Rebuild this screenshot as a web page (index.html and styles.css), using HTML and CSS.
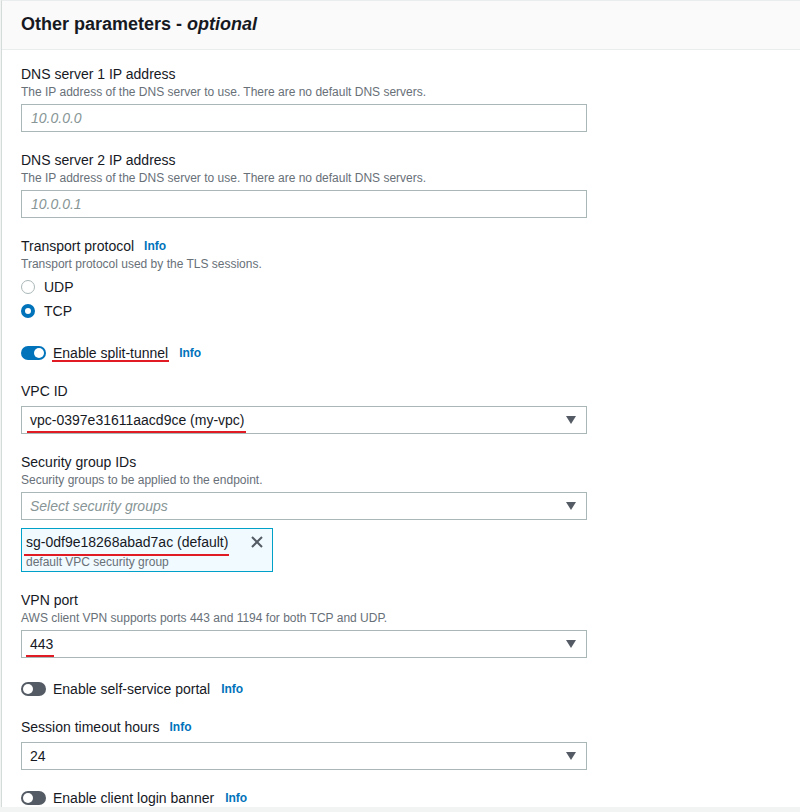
FILE: index.html
```html
<!DOCTYPE html>
<html lang="en">
<head>
<meta charset="utf-8">
<title>Other parameters</title>
<link rel="stylesheet" href="styles.css">
</head>
<body>
<div class="card">
  <div class="card-header">
    <h2 class="title">Other parameters - <i>optional</i></h2>
  </div>
  <div class="card-body">
    <div class="field">
      <div class="label">DNS server 1 IP address</div>
      <div class="desc">The IP address of the DNS server to use. There are no default DNS servers.</div>
      <div class="input"><span class="placeholder">10.0.0.0</span></div>
    </div>
    <div class="field">
      <div class="label">DNS server 2 IP address</div>
      <div class="desc">The IP address of the DNS server to use. There are no default DNS servers.</div>
      <div class="input"><span class="placeholder">10.0.0.1</span></div>
    </div>
    <div class="field">
      <div class="label">Transport protocol <a class="info">Info</a></div>
      <div class="desc">Transport protocol used by the TLS sessions.</div>
      <div class="radios">
        <div class="radio-row"><span class="radio"></span><span>UDP</span></div>
        <div class="radio-row"><span class="radio checked"></span><span>TCP</span></div>
      </div>
    </div>
    <div class="toggle-row first-toggle">
      <span class="toggle on"></span>
      <span class="toggle-label"><span class="mark mark-tog">Enable split-tunnel</span></span>
      <a class="info">Info</a>
    </div>
    <div class="field">
      <div class="label">VPC ID</div>
      <div class="select"><span class="value"><span class="mark mark-sel">vpc-0397e31611aacd9ce (my-vpc)</span></span><span class="caret"></span></div>
    </div>
    <div class="field">
      <div class="label">Security group IDs</div>
      <div class="desc">Security groups to be applied to the endpoint.</div>
      <div class="select"><span class="value placeholder">Select security groups</span><span class="caret"></span></div>
      <div class="token">
        <div class="token-text">
          <div class="token-main"><span class="mark mark-tok">sg-0df9e18268abad7ac (default)</span></div>
          <div class="token-sub">default VPC security group</div>
        </div>
        <svg class="token-x" width="14" height="14" viewBox="0 0 14 14"><path d="M2 2 L12 12 M12 2 L2 12" stroke="#545b64" stroke-width="2" fill="none"/></svg>
      </div>
    </div>
    <div class="field">
      <div class="label">VPN port</div>
      <div class="desc">AWS client VPN supports ports 443 and 1194 for both TCP and UDP.</div>
      <div class="select"><span class="value"><span class="mark mark-sel mark-port">443</span></span><span class="caret"></span></div>
    </div>
    <div class="toggle-row mid-toggle">
      <span class="toggle"></span>
      <span class="toggle-label">Enable self-service portal</span>
      <a class="info">Info</a>
    </div>
    <div class="field">
      <div class="label">Session timeout hours <a class="info">Info</a></div>
      <div class="select"><span class="value">24</span><span class="caret"></span></div>
    </div>
    <div class="toggle-row">
      <span class="toggle"></span>
      <span class="toggle-label">Enable client login banner</span>
      <a class="info">Info</a>
    </div>
  </div>
</div>
</body>
</html>
```
FILE: styles.css
```css
* { box-sizing: border-box; }
html, body { margin: 0; padding: 0; }
body {
  background: #f2f3f3;
  font-family: "Liberation Sans", Arial, sans-serif;
  color: #16191f;
  height: 812px;
  overflow: hidden;
}
.card {
  margin: 0 -4px 0 1px;
  background: #fff;
  border-left: 1px solid #d5dbdb;
  border-top: 1px solid #eaeded;
  height: 807px;
  overflow: hidden;
}
.card-header {
  height: 49px;
  background: #fafafa;
  border-bottom: 1px solid #eaeded;
  padding: 0 19px;
  display: flex;
  align-items: center;
}
.title {
  margin: 0;
  font-size: 18px;
  font-weight: 700;
  line-height: 22px;
  padding-bottom: 2px;
}
.card-body {
  padding: 14px 0 0 19px;
  width: 585px;
  display: flex;
  flex-direction: column;
  gap: 18px;
}
.field { display: flex; flex-direction: column; }
.label {
  font-size: 14px;
  line-height: 20px;
  display: flex;
  align-items: center;
  gap: 10px;
}
.desc {
  font-size: 12px;
  line-height: 16px;
  color: #687078;
}
.info {
  color: #0073bb;
  font-weight: 700;
  font-size: 12px;
  text-decoration: none;
}
.input, .select {
  height: 28px;
  border: 1px solid #aab7b8;
  background: #fff;
  display: flex;
  align-items: center;
  font-size: 14px;
}
.input { margin-top: 4px; padding: 0 9px; }
.select { margin-top: 5px; padding: 0 5px 0 8px; justify-content: space-between; }
.desc + .select { margin-top: 4px; }
.placeholder { color: #879596; font-style: italic; }
.caret {
  width: 0; height: 0;
  border-left: 5px solid transparent;
  border-right: 5px solid transparent;
  border-top: 8px solid #545b64;
  margin-right: 5px;
}
.radios { display: flex; flex-direction: column; margin-top: 3px; }
.radio-row {
  height: 24px;
  display: flex;
  align-items: center;
  gap: 9px;
  font-size: 14px;
}
.radio {
  width: 14px; height: 14px;
  border-radius: 50%;
  border: 1px solid #aab7b8;
  background: #fff;
  display: inline-block;
}
.radio.checked { border: 4px solid #0073bb; }
.toggle-row {
  display: flex;
  align-items: center;
  height: 20px;
  font-size: 14px;
}
.first-toggle { margin-top: 2px; }
.mid-toggle { margin-top: 3px; }
.toggle {
  width: 25px; height: 14px;
  border-radius: 7px;
  background: #545b64;
  position: relative;
  display: inline-block;
  margin-right: 7px;
}
.toggle::after {
  content: "";
  position: absolute;
  top: 2px; left: 2px;
  width: 10px; height: 10px;
  border-radius: 50%;
  background: #fff;
}
.toggle.on { background: #0073bb; }
.toggle.on::after { left: 13px; }
.toggle-label { margin-right: 11px; }
.mark { position: relative; }
.mark::after {
  content: "";
  position: absolute;
  left: -1px; right: -1px;
  bottom: -3px;
  height: 2px;
  background: #e01b24;
}
.mark-tog::after { bottom: -1px; }
.mark-sel::after { left: -3px; bottom: -5px; }
.mark-tok::after { left: -2px; bottom: -6px; }
.mark-port::after { left: -4px; bottom: -5px; }
.token {
  margin-top: 8px;
  width: 252px;
  height: 44px;
  background: #f1faff;
  border: 1px solid #00a1c9;
  display: flex;
  align-items: flex-start;
  padding: 3px 8px 0 4px;
  justify-content: space-between;
}
.token-main { font-size: 14px; line-height: 20px; }
.token-sub { font-size: 12px; line-height: 16px; color: #687078; margin-top: 2px; }
.token-x { margin-top: 3px; }
```
